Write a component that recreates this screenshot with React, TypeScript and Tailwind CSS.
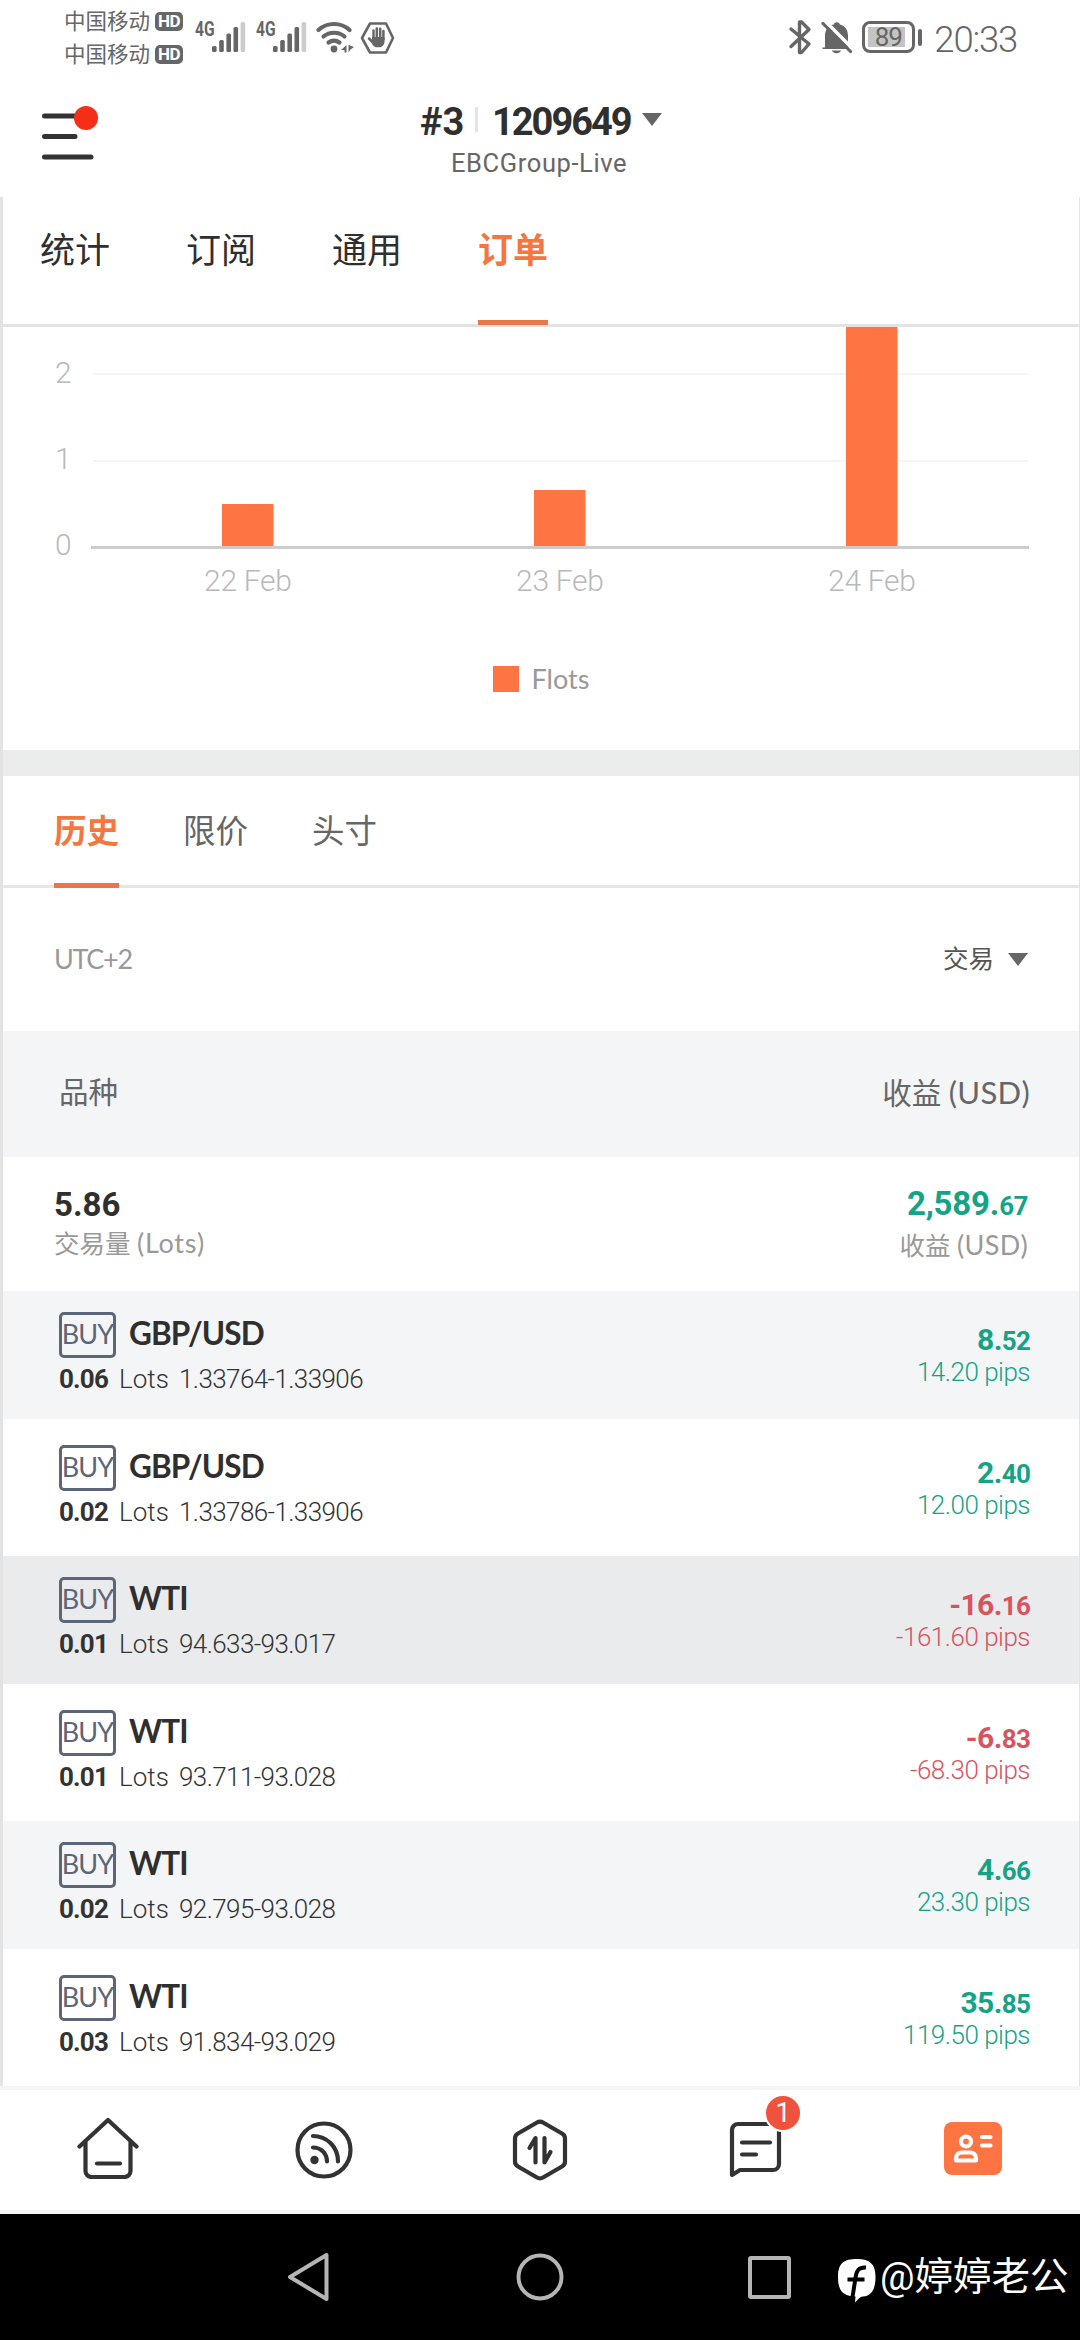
import clsx from "clsx";

type Order = {
  symbol: string;
  lots: string;
  price: string;
  whole: string;
  cents: string;
  pips: string;
  bg: string;
};

const orders: Order[] = [
  { symbol: "GBP/USD", lots: "0.06", price: "1.33764-1.33906", whole: "8.", cents: "52", pips: "14.20 pips", bg: "bg-[#f4f5f7]" },
  { symbol: "GBP/USD", lots: "0.02", price: "1.33786-1.33906", whole: "2.", cents: "40", pips: "12.00 pips", bg: "bg-white" },
  { symbol: "WTI", lots: "0.01", price: "94.633-93.017", whole: "-16.", cents: "16", pips: "-161.60 pips", bg: "bg-[#eaebec]" },
  { symbol: "WTI", lots: "0.01", price: "93.711-93.028", whole: "-6.", cents: "83", pips: "-68.30 pips", bg: "bg-white" },
  { symbol: "WTI", lots: "0.02", price: "92.795-93.028", whole: "4.", cents: "66", pips: "23.30 pips", bg: "bg-[#f4f5f7]" },
  { symbol: "WTI", lots: "0.03", price: "91.834-93.029", whole: "35.", cents: "85", pips: "119.50 pips", bg: "bg-white" },
];

const bars = [
  { label: "22 Feb", x: 222, top: 177 },
  { label: "23 Feb", x: 534, top: 163 },
  { label: "24 Feb", x: 846, top: 0 },
];

function Signal() {
  return (
    <div className="flex w-[51px] items-start">
      <span className="w-[17px] origin-left scale-x-[0.78] text-[20px] leading-[14px] font-bold">4G</span>
      <svg width="34" height="31" viewBox="0 0 34 31" fill="#666">
        <rect x="0" y="24" width="4.6" height="6" rx="1.5" />
        <rect x="7.2" y="18" width="4.6" height="12" rx="1.5" />
        <rect x="14.4" y="11.5" width="4.6" height="18.5" rx="1.5" />
        <rect x="21.5" y="5" width="4.6" height="25" rx="1.5" />
        <rect x="28.6" y="0" width="4.6" height="30" rx="1.5" fill="#ccc" />
      </svg>
    </div>
  );
}

function Carrier() {
  return (
    <div className="flex h-[33px] items-center gap-[5px]">
      <span className="text-[21.5px] leading-[33px]">中国移动</span>
      <span className="flex h-[19px] w-[28px] items-center justify-center rounded-[5px] bg-[#666] text-[17px] leading-none font-bold tracking-[-0.5px] text-white">
        HD
      </span>
    </div>
  );
}

function StatusBar() {
  return (
    <div className="flex h-[78px] items-start justify-between pr-[63px] pl-[64px] text-[#666]">
      <div className="flex">
        <div className="mt-[5px] w-[131px]">
          <Carrier />
          <Carrier />
        </div>
        <div className="mt-[22px] flex">
          <Signal />
          <div className="w-[10px]" />
          <Signal />
        </div>
        <svg className="mt-[21px] ml-[9px]" width="38" height="33" viewBox="0 0 38 33" fill="none" stroke="#666" strokeWidth="4.2" strokeLinecap="round">
          <path d="M2.5 9C11 1 25 1 33.500 9" />
          <path d="M7.5 15.5C13.5 10.500 22.500 10.500 28.500 15.500" />
          <path d="M12.5 21.5C16 19 20 19 23.500 21.500" />
          <circle cx="18" cy="28" r="3.4" fill="#666" stroke="none" />
          <path d="M30.500 24v7.500h-2v-2.500h-3.500zM32.500 31.500v-7.500l5.500 2-3.500 2.500z" fill="#666" stroke="none" />
        </svg>
        <svg className="mt-[21px] ml-[6px]" width="36" height="34" viewBox="0 0 36 34">
          <path d="M10 2.500h16L33 17l-7 14.500H10L2 17z" fill="none" stroke="#666" strokeWidth="2.6" strokeLinejoin="round" />
          <g stroke="#666" strokeWidth="2.5" strokeLinecap="round">
            <path d="M13.5 18V9.5M16.8 17V7.5M20.2 17V7.8M23.4 18v-8M9 17.500l5 5" />
          </g>
          <path d="M12.3 16h12.300v4c0 3-1.600 5.500-4 6.200h-5c-2.500-1-3.500-3-4.500-5.200z" fill="#666" />
        </svg>
      </div>

      <div className="flex">
        <svg className="mt-[19px]" width="24" height="36" viewBox="0 0 24 36" fill="none" stroke="#666" strokeWidth="3.4" strokeLinecap="round" strokeLinejoin="round">
          <path d="M3 10l18 15-7.500 8.500h-2V3h2L21 10.500 3 27.500" />
        </svg>
        <svg className="mt-[20px] ml-[9px]" width="32" height="35" viewBox="0 0 32 35">
          <path d="M4 28V16C4 9 8 5 13 4.500c0-3 5-3 6 0C25 6 27 11 27 16v12z" fill="#666" />
          <path d="M1.500 27.500h26v1.500h-26zM11 30.500h9c-1 3.500-8 3.500-9 0z" fill="#666" />
          <path d="M4 1l28 28" stroke="#fff" strokeWidth="3.5" />
          <path d="M2 3.500l27.500 28" stroke="#666" strokeWidth="3.2" strokeLinecap="round" />
        </svg>
        <div className="mt-[21px] ml-[9px] flex h-[32px] w-[53px] items-center rounded-[8px] border-[3px] border-[#666] pl-[3px]">
          <div className="flex h-[20px] w-[37px] items-center justify-center bg-[#c4c4c4] pl-[3px] text-[26px] leading-none tracking-[-1px]">
            89
          </div>
        </div>
        <div className="mt-[29px] ml-[3px] h-[17px] w-[4px] rounded-[2px] bg-[#666]" />
        <span className="mt-[19px] ml-[12px] text-[36.5px] leading-[42px] font-[350] tracking-[-1.2px]">20:33</span>
      </div>
    </div>
  );
}

function Caret() {
  return (
    <svg width="20" height="13" viewBox="0 0 20 13" fill="#666">
      <path d="M0 0h20L10 13z" />
    </svg>
  );
}

function Header() {
  return (
    <div className="flex h-[119px]">
      <div className="w-[420px] pl-[42px]">
        <svg className="mt-[27px]" width="58" height="56" viewBox="0 0 58 56">
          <path d="M2.500 11H40M2.500 31.500H33M2.500 52H49" stroke="#333" strokeWidth="5" strokeLinecap="round" />
          <circle cx="44" cy="13" r="12" fill="#f52f17" />
        </svg>
      </div>
      <div className="w-[245px]">
        <div className="mt-[22px] flex h-[44px] items-center text-[38px] leading-[44px] font-bold text-[#2f2f2f]">
          <span className="w-[55px]">#3</span>
          <span className="mb-[5px] h-[25px] w-[3px] bg-[#e4e4e4]" />
          <span className="ml-[14px] w-[150px] tracking-[-2px]">1209649</span>
          <span className="-mt-[5px]">
            <Caret />
          </span>
        </div>
        <div className="ml-[31px] text-[25.5px] leading-[38px] font-[450] tracking-[0.6px] text-[#666]">EBCGroup-Live</div>
      </div>
    </div>
  );
}

function Tabs() {
  return (
    <div className="flex h-[130px] gap-[76px] border-b-[3px] border-[#e3e3e3] pl-[37px] text-[35px] leading-[110px] text-[#2f2f2f]">
      {["统计", "订阅", "通用", "订单"].map((tab) => (
        <div
          key={tab}
          className={clsx("h-[128px] w-[70px] whitespace-nowrap", tab === "订单" && "border-b-[5px] border-[#ec7649] font-bold text-[#f5763f]")}
        >
          {tab}
        </div>
      ))}
    </div>
  );
}

function Chart() {
  return (
    <div className="h-[423px]">
      <svg className="-ml-[3px] block" width="1079" height="320" viewBox="0 0 1079 320" fontSize="30" fontWeight="350" fill="#b9b9b9">
        <path d="M93 47h935M93 134h935" stroke="#f5f5f5" strokeWidth="2" />
        <text x="55" y="56">2</text>
        <text x="55" y="142">1</text>
        <text x="55" y="228">0</text>
        {bars.map((bar) => (
          <g key={bar.label}>
            <rect x={bar.x} y={bar.top} width="51.5" height={220 - bar.top} fill="#ff7443" />
            <text x={bar.x + 26} y="264" textAnchor="middle" textLength="88">
              {bar.label}
            </text>
          </g>
        ))}
        <path d="M91 220.500h938" stroke="#ccc" strokeWidth="3" />
      </svg>
      <div className="mt-[13px] flex h-[38px] items-center justify-center gap-[13px]">
        <span className="size-[26px] bg-[#ff7443]" />
        <span className="font-[Lato] text-[27px] leading-[36px] text-[#999]">Flots</span>
      </div>
    </div>
  );
}

function OrderTabs() {
  return (
    <div className="flex h-[112px] gap-[64px] border-b-[3px] border-[#e6e6e6] pl-[51px] text-[32.5px] leading-[112px] text-[#666]">
      {["历史", "限价", "头寸"].map((tab) => (
        <div
          key={tab}
          className={clsx("h-[112px] w-[65px] whitespace-nowrap", tab === "历史" && "border-b-[5px] border-[#ec7649] font-bold text-[#f5763f]")}
        >
          {tab}
        </div>
      ))}
    </div>
  );
}

function OrderRow({ symbol, lots, price, whole, cents, pips, bg }: Order) {
  return (
    <div className={clsx("flex h-[132.5px] justify-between border-b-[5.5px] border-white pr-[49px] pl-[56px]", bg)}>
      <div className="pt-[21px]">
        <div className="flex h-[46px]">
          <span className="flex w-[57px] justify-center rounded-[5px] border-[3px] border-[#5c6678] font-[Lato] text-[27px] leading-[37px] tracking-[-0.8px] text-[#5c6678]">
            BUY
          </span>
          <span className="ml-[13px] font-[Lato] text-[31.5px] leading-[43px] font-bold tracking-[-0.9px] text-[#2f2f2f]">{symbol}</span>
        </div>
        <div className="mt-[4px] flex text-[26px] leading-[34px] text-[#333]">
          <span className="w-[60px] font-bold tracking-[-0.8px]">{lots}</span>
          <span className="w-[60px] font-[350]">Lots</span>
          <span className="font-[350] tracking-[-0.6px]">{price}</span>
        </div>
      </div>
      <div className={clsx("pt-[29px] text-right", whole.startsWith("-") ? "text-[#d9535f]" : "text-[#15a386]")}>
        <div className="text-[30px] leading-[40px] font-bold tracking-[-0.6px]">
          {whole}
          <span className="text-[26px] tracking-[-0.8px]">{cents}</span>
        </div>
        <div className="-mt-[6px] text-[26px] leading-[34px] font-[350] tracking-[-0.5px]">{pips}</div>
      </div>
    </div>
  );
}

function BottomNav() {
  return (
    <div className="grid h-[128px] grid-cols-5 items-center justify-items-center border-y-[4px] border-[#f5f5f5] bg-white">
      <svg className="mb-[6px]" width="64" height="64" viewBox="0 0 64 64" fill="none" stroke="#333" strokeWidth="4.2" strokeLinecap="round" strokeLinejoin="round">
        <path d="M3.500 31.500L32 5l28.500 26.500M9.500 27v29a6 6 0 0 0 6 6h33a6 6 0 0 0 6-6V27M21 48.500h23" />
      </svg>
      <svg width="62" height="62" viewBox="0 0 62 62" fill="none" stroke="#333" strokeWidth="4.2" strokeLinecap="round">
        <circle cx="31" cy="31" r="26.5" />
        <path d="M20 17c14 0 25 11 25 25.500M20 28.500c8 0 14 6 14 14" />
        <circle cx="21.5" cy="41" r="4.2" fill="#333" stroke="none" />
      </svg>
      <svg width="62" height="64" viewBox="0 0 62 64" fill="none" stroke="#333" strokeWidth="4.2" strokeLinecap="round" strokeLinejoin="round">
        <path d="M28 4.500q3-1.700 6 0L53 15.500q3 1.700 3 5v23q0 3.300-3 5L34 59.500q-3 1.700-6 0L9 48.500q-3-1.700-3-5v-23q0-3.300 3-5z" />
        <path d="M26.500 44.500V20L20.500 30M35.500 20v24.500L41.500 34" />
      </svg>
      <div className="relative mb-[3px]">
        <svg width="56" height="58" viewBox="0 0 56 58" fill="none" stroke="#333" strokeWidth="4.2" strokeLinecap="round" strokeLinejoin="round">
          <path d="M4 55V10a6 6 0 0 1 6-6h41v40a6 6 0 0 1-6 6H12zM14 22.500h28M14 34.500h14" />
        </svg>
        <span className="absolute -top-[26px] -right-[18px] flex size-[38px] items-center justify-center rounded-full border-[2.5px] border-white bg-[#f0523c] text-[28px] leading-none text-white">
          1
        </span>
      </div>
      <svg className="mb-[4px] ml-px" width="58" height="53" viewBox="0 0 58 53">
        <rect width="58" height="53" rx="8" fill="#ff7443" />
        <g fill="none" stroke="#fff" strokeWidth="4.2" strokeLinecap="round" strokeLinejoin="round">
          <circle cx="22" cy="19.5" r="5" />
          <path d="M12 38.500v-2c0-4 2.500-6 6-6h8c3.500 0 6 2 6 6v2zM38 15h8.500M38 23.500h8.500" />
        </g>
      </svg>
    </div>
  );
}

function SystemNav() {
  return (
    <div className="flex h-[126px] items-center bg-black pl-[287px]">
      <svg width="43" height="50" viewBox="0 0 43 50" fill="none" stroke="#b5b5b5" strokeWidth="4" strokeLinejoin="round">
        <path d="M39.500 3v44L3 25z" />
      </svg>
      <svg className="ml-[186px]" width="48" height="48" viewBox="0 0 48 48" fill="none" stroke="#b5b5b5" strokeWidth="4">
        <circle cx="24" cy="24" r="21.5" />
      </svg>
      <span className="ml-[184px] size-[43px] rounded-[3px] border-4 border-[#b5b5b5]" />
      <svg className="mt-[8px] ml-[47px]" width="38" height="44" viewBox="0 0 38 44">
        <path d="M19 0C32 0 37.500 5 37.500 18S33 37 25 37.500C21 38 20 41 17 43.500L17.500 37.500C5 37 0 32 0 18S6 0 19 0z" fill="#fff" />
        <path d="M28 8.500C21 8 18.500 11 17.500 19L14.500 38M9.500 20.500H26.500" fill="none" stroke="#000" strokeWidth="4" />
      </svg>
      <span className="ml-[4px] text-[38.5px] leading-[50px] whitespace-nowrap text-white">@婷婷老公</span>
    </div>
  );
}

export default function App() {
  return (
    <div className="h-[2340px] w-[1080px] overflow-hidden bg-white font-[Roboto,'Noto_Sans_CJK_SC',sans-serif]">
      <StatusBar />
      <Header />

      <div className="h-[1889px] border-r border-l-[3px] border-r-[#e3e3e3] border-l-[#e3e3e3]">
        <Tabs />
        <Chart />
        <div className="h-[26px] bg-[#ebecec]" />
        <OrderTabs />

        <div className="flex h-[143px] items-center justify-between pr-[51px] pl-[51px]">
          <span className="font-[Lato] text-[27px] tracking-[-1.3px] text-[#999]">UTC+2</span>
          <div className="flex items-center gap-[14px] text-[25.5px] text-[#555]">
            交易
            <Caret />
          </div>
        </div>

        <div className="flex h-[126px] items-center justify-between bg-[#f4f5f7] pr-[49px] pb-[3px] pl-[56px] font-[Lato,'Noto_Sans_CJK_SC',sans-serif] text-[29.5px] text-[#666]">
          <span>品种</span>
          <span>
            收益 <span className="text-[31px] tracking-[0.3px]">(USD)</span>
          </span>
        </div>

        <div className="flex h-[134px] justify-between pr-[51px] pl-[51px]">
          <div>
            <div className="mt-[27px] text-[33px] leading-[42px] font-bold text-[#2f2f2f]">5.86</div>
            <div className="-mt-px font-[Lato,'Noto_Sans_CJK_SC',sans-serif] text-[25.5px] leading-[36px] text-[#999]">
              交易量 <span className="text-[27px] tracking-[0.7px]">(Lots)</span>
            </div>
          </div>
          <div className="text-right">
            <div className="mt-[26px] text-[33px] leading-[42px] font-bold tracking-[-0.2px] text-[#15a386]">
              2,589.<span className="text-[26px] tracking-[-0.5px]">67</span>
            </div>
            <div className="font-[Lato,'Noto_Sans_CJK_SC',sans-serif] text-[25.5px] leading-[36px] text-[#999]">
              收益 <span className="text-[27px] tracking-[0.3px]">(USD)</span>
            </div>
          </div>
        </div>

        {orders.map((order) => (
          <OrderRow key={order.price} {...order} />
        ))}
      </div>

      <BottomNav />
      <SystemNav />
    </div>
  );
}
